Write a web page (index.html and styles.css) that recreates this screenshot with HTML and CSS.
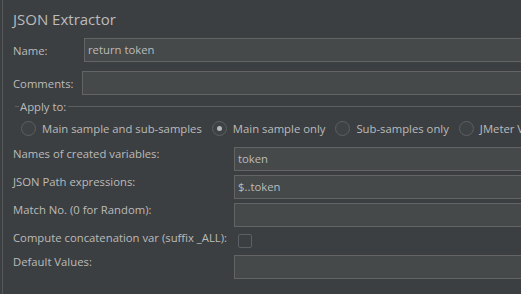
FILE: index.html
```html
<!DOCTYPE html>
<html lang="en">
<head>
    <meta charset="UTF-8">
    <title>JSON Extractor</title>
    <link rel="stylesheet" href="styles.css">
</head>
<body>
    <div class="panel">
        <h1 class="title">JSON Extractor</h1>

        <div class="field name-row">
            <label>Name:</label>
            <div class="input">return token</div>
        </div>
        <div class="field comments-row">
            <label>Comments:</label>
            <div class="input"></div>
        </div>

        <div class="apply">
            <div class="legend"><span class="dash"></span><span class="legend-text">Apply to:</span><span class="rule"></span></div>
            <div class="radios">
                <span class="radio"></span><span class="radio-label">Main sample and sub-samples</span>
                <span class="radio checked"></span><span class="radio-label">Main sample only</span>
                <span class="radio"></span><span class="radio-label">Sub-samples only</span>
                <span class="radio"></span><span class="radio-label">JMeter Variable Name to use</span>
            </div>
        </div>

        <div class="grid">
            <label>Names of created variables:</label>
            <div class="input">token</div>
            <label>JSON Path expressions:</label>
            <div class="input">$..token</div>
            <label>Match No. (0 for Random):</label>
            <div class="input"></div>
            <label>Compute concatenation var (suffix _ALL):</label>
            <div class="check-cell"><span class="checkbox"></span></div>
            <label>Default Values:</label>
            <div class="input"></div>
        </div>
    </div>
</body>
</html>
```

FILE: styles.css
```css
body {
    margin: 0;
    background-color: #3c3f41;
    font-family: "Open Sans", "Noto Sans", sans-serif;
    font-size: 11.3px;
    color: #bbbbbb;
    overflow: hidden;
    width: 521px;
    height: 294px;
}
.panel {
    margin-left: 2px;
    border-left: 1px solid #555759;
    height: 294px;
    padding-left: 10px;
    width: 700px;
    overflow: hidden;
}
.title {
    margin: 0;
    padding-top: 8px;
    height: 30px;
    font-size: 15px;
    font-weight: normal;
    line-height: 22px;
}
.field {
    display: flex;
    align-items: center;
}
.field label {
    flex: none;
}
.name-row {
    height: 24px;
}
.name-row label {
    width: 71px;
}
.comments-row {
    margin-top: 9px;
    height: 24px;
}
.comments-row label {
    width: 69px;
}
.input {
    box-sizing: border-box;
    height: 24px;
    flex: 1;
    background-color: #45494a;
    border: 1px solid #646464;
    padding-left: 3px;
    line-height: 22px;
}
.apply {
    margin-left: 2px;
    margin-top: 3px;
}
.legend {
    display: flex;
    align-items: center;
    height: 16px;
}
.dash {
    width: 4px;
    border-top: 1px solid #5e6060;
}
.legend-text {
    padding: 0 2px 0 1px;
}
.rule {
    flex: 1;
    border-top: 1px solid #5e6060;
}
.radios {
    display: flex;
    align-items: center;
    height: 28px;
    padding-left: 6px;
    white-space: nowrap;
}
.radio {
    flex: none;
    box-sizing: border-box;
    width: 15px;
    height: 15px;
    border-radius: 50%;
    border: 1px solid #5d6062;
    background-color: #3e4244;
    margin-right: 6px;
    display: flex;
    align-items: center;
    justify-content: center;
}
.radio.checked::after {
    content: "";
    width: 5px;
    height: 5px;
    border-radius: 50%;
    background-color: #b8b8b8;
}
.radio-label {
    margin-right: 10px;
}
.grid {
    display: grid;
    grid-template-columns: 221px 1fr;
    grid-template-rows: 24px 24px 24px 20px 24px;
    row-gap: 4px;
    margin-top: 5px;
    align-items: center;
}
.grid label {
    align-self: start;
    line-height: 14px;
    white-space: nowrap;
}
.check-cell {
    padding-left: 4px;
    height: 20px;
    display: flex;
    align-items: center;
}
.checkbox {
    box-sizing: border-box;
    width: 14px;
    height: 14px;
    border: 1px solid #5d6062;
    border-radius: 2px;
}
```
